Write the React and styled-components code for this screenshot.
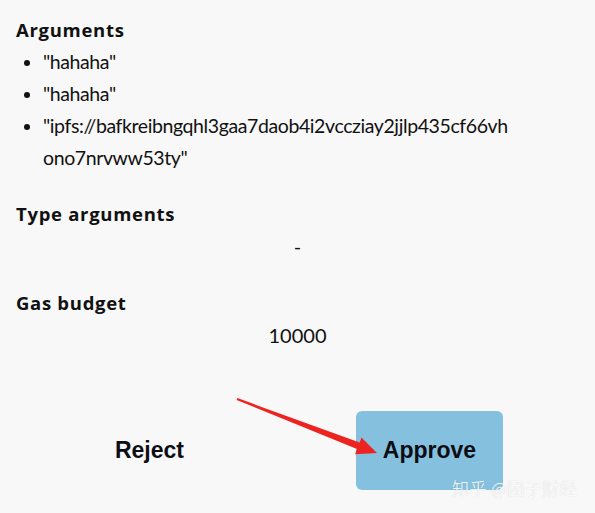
import React from "react";
import styled, { createGlobalStyle } from "styled-components";

const GlobalStyle = createGlobalStyle`
  html, body {
    margin: 0;
    padding: 0;
    background: #f8f8f8;
  }
`;

export default function App() {
  return (
    <>
      <GlobalStyle />
      <Page>
        <Section>
          <Heading>Arguments</Heading>
          <ArgList>
            <ArgItem>"hahaha"</ArgItem>
            <ArgItem>"hahaha"</ArgItem>
            <ArgItem>
              "ipfs://bafkreibngqhl3gaa7daob4i2vccziay2jjlp435cf66vh
              <br />
              ono7nrvww53ty"
            </ArgItem>
          </ArgList>
        </Section>

        <Section gap={28}>
          <Heading>Type arguments</Heading>
          <Value>-</Value>
        </Section>

        <Section gap={29}>
          <Heading>Gas budget</Heading>
          <Value>10000</Value>
        </Section>

        <Actions>
          <Button>Reject</Button>
          <Button primary>Approve</Button>
        </Actions>

        <Arrow viewBox="0 0 595 513">
          <polygon
            points="237.4,398.1 359.6,442.5 361.5,437.4 377,453 355.1,454.2 357,449.1 236.6,399.9"
            fill="#ee2320"
          />
        </Arrow>
        <Watermark>知乎 @团子财经</Watermark>
      </Page>
    </>
  );
}

const Page = styled.div`
  position: relative;
  width: 595px;
  height: 513px;
  box-sizing: border-box;
  padding: 18px 16px 0;
  color: #111;
  overflow: hidden;
`;

const Section = styled.section`
  display: flex;
  flex-direction: column;
  margin-top: ${(p) => (p.gap ? p.gap : 0)}px;
`;

const Heading = styled.h3`
  margin: 0;
  font-family: "Open Sans", "Noto Sans", sans-serif;
  font-weight: 700;
  font-size: 18.5px;
  line-height: 24px;
  letter-spacing: 0.7px;
  color: #111;
`;

const ArgList = styled.ul`
  margin: 4px 0 0;
  padding-left: 27px;
  font-family: Lato, "Open Sans", sans-serif;
  font-size: 19.5px;
  line-height: 32px;
  letter-spacing: -0.4px;
`;

const ArgItem = styled.li`
  line-height: 32px;
`;

const Value = styled.div`
  margin-top: 4px;
  text-align: center;
  font-family: Lato, "Open Sans", sans-serif;
  font-size: 20px;
  line-height: 32px;
`;

const Actions = styled.div`
  display: flex;
  align-items: center;
  gap: 133px;
  margin-top: 60px;
  padding-left: 60px;
`;

const Button = styled.button`
  width: 147px;
  height: 79px;
  border: none;
  border-radius: 6px;
  background: ${(p) => (p.primary ? "#85c1df" : "transparent")};
  font-family: "Liberation Sans", Arial, sans-serif;
  font-weight: 700;
  font-size: 23px;
  color: #0d0d14;
  cursor: pointer;
`;

const Arrow = styled.svg`
  position: absolute;
  left: 0;
  top: 0;
  width: 595px;
  height: 513px;
  pointer-events: none;
`;

const Watermark = styled.div`
  position: absolute;
  left: 452px;
  top: 476px;
  font-family: "Noto Sans CJK SC", sans-serif;
  font-weight: 300;
  font-size: 17px;
  line-height: 24px;
  letter-spacing: 0.5px;
  color: #ffffff;
  text-shadow: 0 0 1px rgba(150, 150, 150, 0.5);
  white-space: nowrap;
`;
